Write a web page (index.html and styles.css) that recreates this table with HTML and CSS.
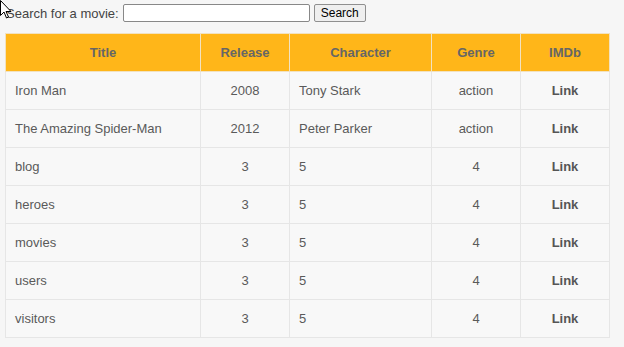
FILE: index.html
```html
<!DOCTYPE html>
<html>
<head>
<meta charset="utf-8">
<link rel="stylesheet" href="styles.css">
</head>
<body>
<svg class="cursor" width="12" height="19" viewBox="0 0 12 19"><path d="M0.5 0.5 L0.5 15.5 L4 12 L6.5 18 L8.5 17 L6 11.5 L11 11.5 Z" fill="#fff" stroke="#000" stroke-width="1"/></svg>
<form class="search">
  <label class="search-label">Search for a movie:</label>
  <input class="search-input" type="text">
  <button class="search-btn" type="button">Search</button>
</form>
<table class="movies">
  <colgroup>
    <col class="c-title"><col class="c-rel"><col class="c-char"><col class="c-genre"><col class="c-imdb">
  </colgroup>
  <thead>
    <tr><th>Title</th><th>Release</th><th>Character</th><th>Genre</th><th>IMDb</th></tr>
  </thead>
  <tbody>
    <tr><td class="l">Iron Man</td><td>2008</td><td class="l">Tony Stark</td><td>action</td><td class="b">Link</td></tr>
    <tr><td class="l">The Amazing Spider-Man</td><td>2012</td><td class="l">Peter Parker</td><td>action</td><td class="b">Link</td></tr>
    <tr><td class="l">blog</td><td>3</td><td class="l">5</td><td>4</td><td class="b">Link</td></tr>
    <tr><td class="l">heroes</td><td>3</td><td class="l">5</td><td>4</td><td class="b">Link</td></tr>
    <tr><td class="l">movies</td><td>3</td><td class="l">5</td><td>4</td><td class="b">Link</td></tr>
    <tr><td class="l">users</td><td>3</td><td class="l">5</td><td>4</td><td class="b">Link</td></tr>
    <tr><td class="l">visitors</td><td>3</td><td class="l">5</td><td>4</td><td class="b">Link</td></tr>
  </tbody>
</table>
</body>
</html>
```
FILE: styles.css
```css
html, body {
  margin: 0;
  background: #f6f6f6;
}
body {
  padding: 4px 6px 4px 5px;
  font-family: "Liberation Sans", Arial, sans-serif;
  font-size: 13px;
  color: #5a5a5a;
  position: relative;
}
.cursor {
  position: absolute;
  left: 0;
  top: 0;
}
.search {
  display: flex;
  align-items: center;
  height: 18px;
  margin: 0 0 0 1px;
}
.search-label {
  color: #444;
  margin-right: 4px;
}
.search-input {
  box-sizing: border-box;
  width: 187px;
  height: 18px;
  margin: 0 4px 0 0;
  border: 1px solid #888;
  border-radius: 2px;
  background: #fff;
  padding: 0 2px;
}
.search-btn {
  box-sizing: border-box;
  height: 18px;
  width: 52px;
  padding: 0;
  margin: 0;
  font-family: "Liberation Sans", Arial, sans-serif;
  font-size: 12px;
  color: #000;
  background: #efefef;
  border: 1px solid #8f8f8f;
  border-radius: 2px;
}
.movies {
  margin-top: 11px;
  border-collapse: collapse;
  table-layout: fixed;
  width: 604px;
  background: #f8f8f8;
}
.c-title { width: 195px; }
.c-rel { width: 89px; }
.c-char { width: 142px; }
.c-genre { width: 89px; }
.c-imdb { width: 89px; }
.movies th, .movies td {
  border: 1px solid #e6e6e6;
  height: 38px;
  padding: 0 9px;
  text-align: center;
  box-sizing: border-box;
}
.movies th {
  background: #ffb619;
  color: #666;
  font-weight: bold;
  border-color: #f2e2c0;
}
.movies td.l { text-align: left; }
.movies td.b { font-weight: bold; color: #555; }
```
